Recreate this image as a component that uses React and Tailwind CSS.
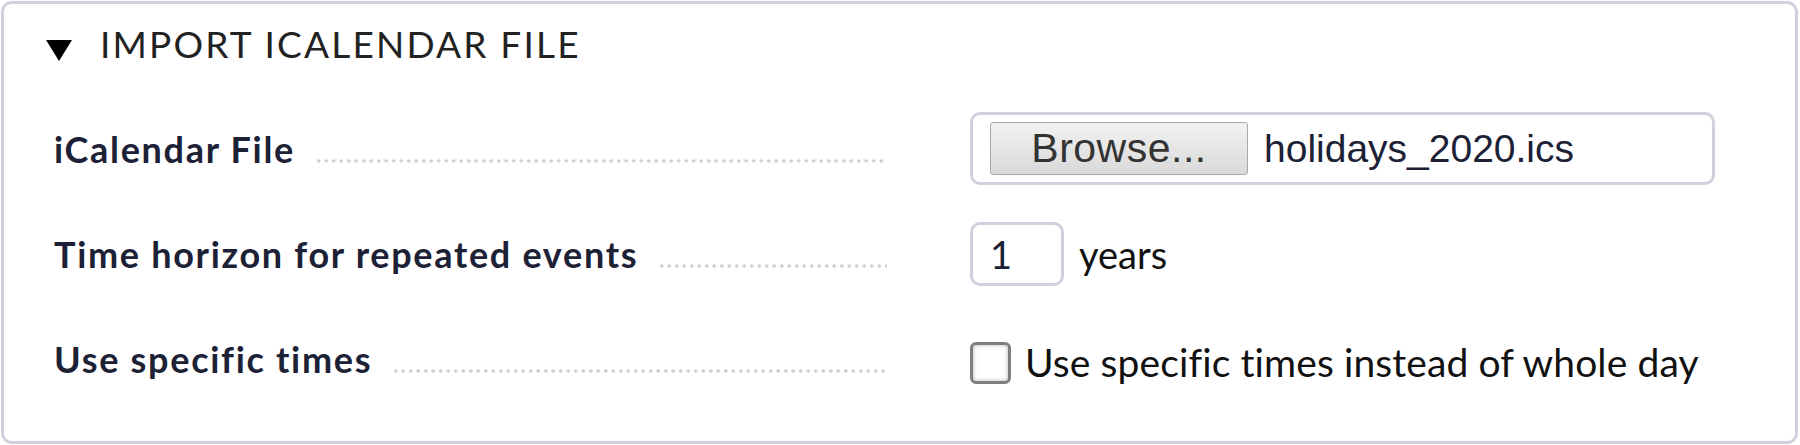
import React from "react";

const Dots = () => (
  <div className="flex-1 h-[4px] mb-[4px] ml-[20px] bg-[radial-gradient(circle,#cdcdd2_1.4px,transparent_1.9px)] bg-[length:7.5px_4px] bg-repeat-x" />
);

const Row = ({ label, children, shift = "" }) => (
  <div className="flex items-center h-[105px]">
    <div className="flex items-end w-[833px] pl-[50px] box-content">
      <span className="font-['Lato',sans-serif] font-bold text-[36px] tracking-[1.7px] text-[#1c2136] leading-none whitespace-nowrap">
        {label}
      </span>
      <Dots />
    </div>
    <div className={`ml-[83px] flex items-center ${shift}`}>{children}</div>
  </div>
);

export default function App() {
  return (
    <div className="bg-white w-[1800px] h-[445px] pt-px pl-px">
      <div className="w-[1797px] h-[443px] border-[3px] border-[#cfd1de] rounded-[11px] bg-white">
        <div className="flex items-center h-[90px] pb-[6px]">
          <svg width="26" height="21" viewBox="0 0 26 21" className="ml-[42px] mt-[9px]">
            <polygon points="0,0 26,0 13,21" fill="#000" />
          </svg>
          <span className="ml-[28px] mb-[5px] font-['Lato',sans-serif] text-[37px] tracking-[2.2px] text-[#222] leading-none">
            IMPORT ICALENDAR FILE
          </span>
        </div>
        <div className="pt-[2px]">
          <Row label="iCalendar File">
            <div className="flex items-center w-[745px] h-[73px] border-[3px] border-[#cfd1de] rounded-[10px] pl-[17px]">
              <div className="flex items-center justify-center w-[258px] h-[53px] border border-[#a9a9a9] rounded-[3px] bg-gradient-to-b from-[#f2f2f2] to-[#d9d9d9] font-['Liberation_Sans',Arial,sans-serif] text-[41px] text-[#333] leading-none tracking-[0.5px]">
                Browse...
              </div>
              <span className="ml-[16px] font-['Liberation_Sans',Arial,sans-serif] text-[39px] text-[#1c2136] leading-none">
                holidays_2020.ics
              </span>
            </div>
          </Row>
          <Row label="Time horizon for repeated events">
            <div className="flex items-center w-[94px] h-[64px] border-[3px] border-[#cfd1de] rounded-[10px] pl-[17px] font-['Lato',sans-serif] text-[38px] text-[#1c2136] leading-none">
              1
            </div>
            <span className="ml-[15px] font-['Lato',sans-serif] text-[38px] text-[#111] leading-none">years</span>
          </Row>
          <Row label="Use specific times" shift="mt-[8px]">
            <div className="w-[41px] h-[42px] border-[3px] border-[#7f7f7f] rounded-[6px] bg-white shadow-[inset_0_0_4px_rgba(0,0,0,0.3)]" />
            <span className="ml-[14px] font-['Lato',sans-serif] text-[39px] text-[#111] leading-none tracking-[0.1px]">
              Use specific times instead of whole day
            </span>
          </Row>
        </div>
      </div>
    </div>
  );
}
